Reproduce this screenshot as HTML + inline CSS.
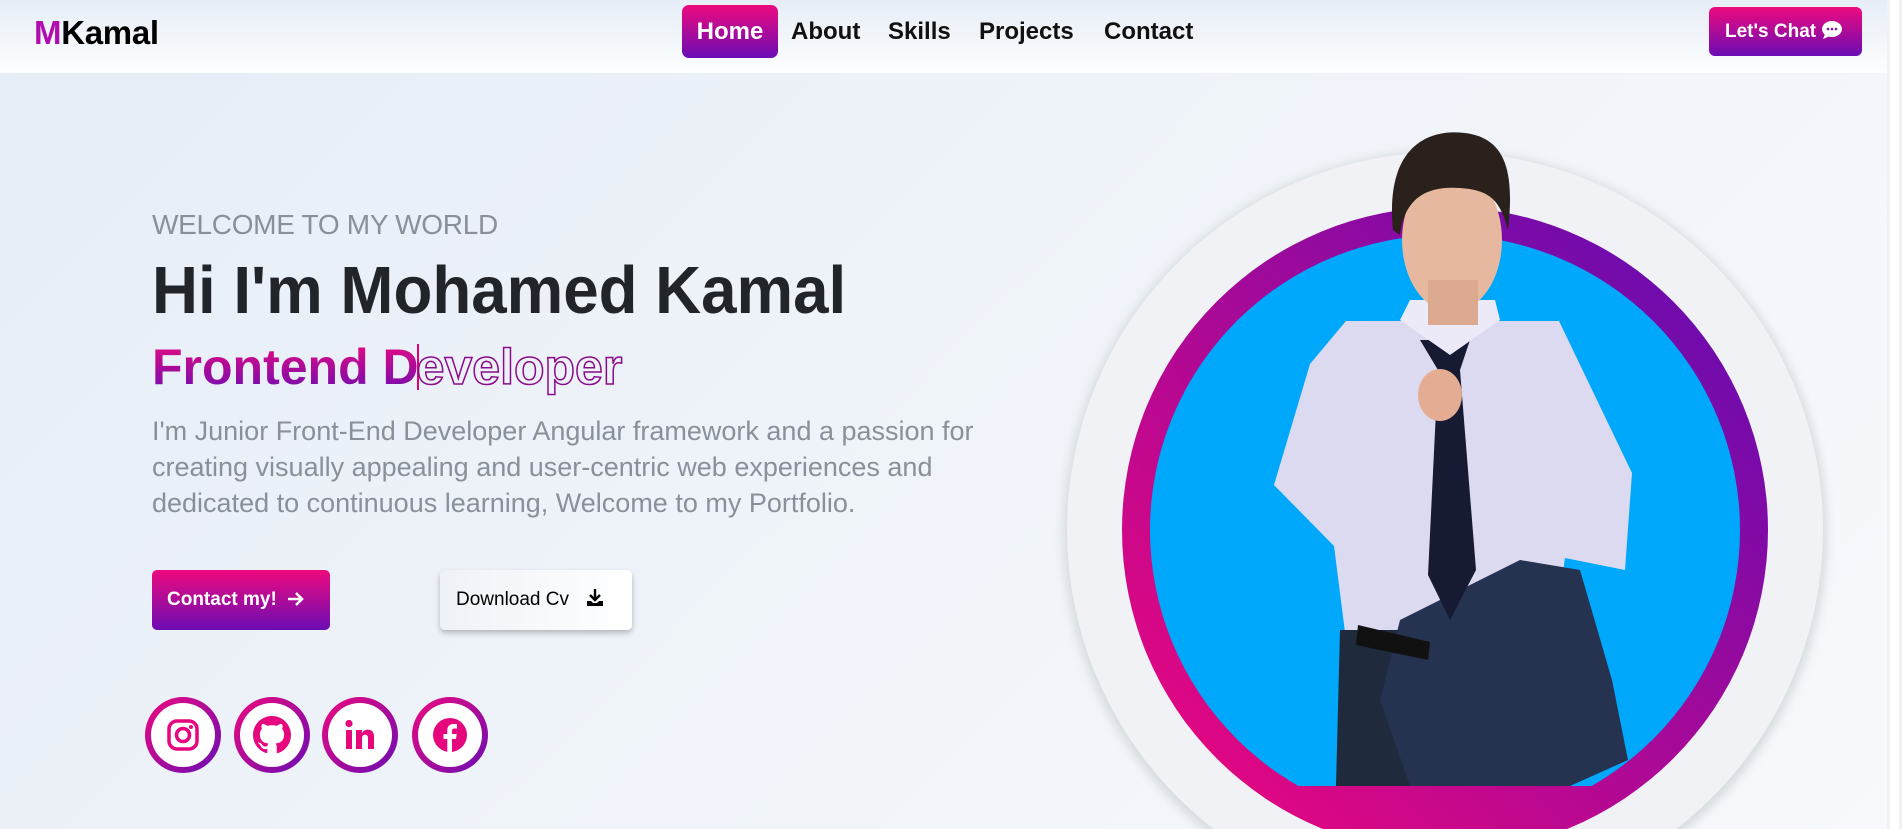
<!DOCTYPE html>
<html><head><meta charset="utf-8"><style>
*{margin:0;padding:0;box-sizing:border-box}
html,body{width:1902px;height:829px;overflow:hidden}
body{font-family:"Liberation Sans",Arial,sans-serif;background:linear-gradient(135deg,#e6edf6 0%,#f1f5fa 60%,#f7f9fc 100%);position:relative}
.nav{position:absolute;left:0;top:0;width:1887px;height:73px;background:linear-gradient(180deg,#e6edf6,#fdfeff)}
.logo{position:absolute;left:34px;top:14px;font-size:33px;font-weight:bold;color:#000;letter-spacing:-0.3px}
.logo span{color:#b00cb0}
.grad{background:linear-gradient(180deg,#ee0a7e,#6a0cb3)}
.home{position:absolute;left:682px;top:5px;width:96px;height:53px;border-radius:7px;color:#fff;font-weight:bold;font-size:24px;text-align:center;line-height:53px}
.nl{position:absolute;top:18px;font-size:24px;font-weight:bold;color:#111}
.chat{position:absolute;left:1709px;top:7px;width:153px;height:49px;border-radius:6px;color:#fff;font-weight:bold;font-size:19px;line-height:49px;padding-left:16px}
.sb{position:absolute;right:0;top:0;width:15px;height:829px;background:#f1f1f1}
.sb2{position:absolute;right:3px;top:0;width:9px;height:829px;background:#fff}
.welcome{position:absolute;left:152px;top:209px;font-size:28px;color:#8a9099;letter-spacing:-0.3px}
.hi{position:absolute;left:152px;top:252px;font-size:67px;font-weight:bold;color:#212529;transform:scaleX(.95);transform-origin:left;white-space:nowrap}
.fd{position:absolute;left:152px;top:338px;font-size:50px;font-weight:bold;white-space:nowrap}
.fd .a{background:linear-gradient(180deg,#ee0a7e,#6a0cb3);-webkit-background-clip:text;color:transparent}
.fd .b{color:transparent;-webkit-text-stroke:1.5px #8a0a8a}
.cur{display:inline-block;width:2px;height:46px;background:#e0007a;vertical-align:-6px;margin:0 -2px}
.p{position:absolute;left:152px;top:413px;width:850px;font-size:27px;line-height:36px;color:#8a9099}
.btn1{position:absolute;left:152px;top:570px;width:178px;height:60px;border-radius:5px;color:#fff;font-weight:bold;font-size:19px;line-height:60px;padding-left:15px}
.btn2{position:absolute;left:440px;top:570px;width:192px;height:60px;border-radius:5px;background:linear-gradient(90deg,#eef2f8,#fff);box-shadow:0 3px 6px rgba(0,0,0,.25);font-size:19px;line-height:60px;padding-left:16px;color:#000}
.soc{position:absolute;top:697px;width:76px;height:76px;border-radius:50%;background:linear-gradient(135deg,#ee0a7e,#6a0cb3);padding:6px}
.soc div{width:100%;height:100%;border-radius:50%;background:#fff;display:flex;align-items:center;justify-content:center}
svg.main{position:absolute;left:0;top:0;display:block}
</style></head><body>
<div class="nav">
<div class="logo"><span>M</span>Kamal</div>
<div class="home grad">Home</div>
<div class="nl" style="left:791px">About</div>
<div class="nl" style="left:888px">Skills</div>
<div class="nl" style="left:979px">Projects</div>
<div class="nl" style="left:1104px">Contact</div>
<div class="chat grad">Let's Chat <svg width="22" height="20" viewBox="0 0 22 20" style="vertical-align:-3px"><ellipse cx="11" cy="9" rx="10" ry="8" fill="#fff"/><path d="M4 14 L2 19 L9 16Z" fill="#fff"/><circle cx="7" cy="9" r="1.3" fill="#8a0cb0"/><circle cx="11" cy="9" r="1.3" fill="#8a0cb0"/><circle cx="15" cy="9" r="1.3" fill="#8a0cb0"/></svg></div>
</div>
<div class="welcome">WELCOME TO MY WORLD</div>
<div class="hi">Hi I'm Mohamed Kamal</div>
<div class="fd"><span class="a">Frontend D</span><span class="cur"></span><span class="b">eveloper</span></div>
<div class="p">I'm Junior Front-End Developer Angular framework and a passion for creating visually appealing and user-centric web experiences and dedicated to continuous learning, Welcome to my Portfolio.</div>
<div class="btn1 grad">Contact my! &nbsp;<svg width="18" height="16" viewBox="0 0 18 16" style="vertical-align:-2px"><path d="M1 8H15M9 2L15 8L9 14" stroke="#fff" stroke-width="2.6" fill="none"/></svg></div>
<div class="btn2">Download Cv &nbsp;&nbsp;<svg width="20" height="20" viewBox="0 0 20 20" style="vertical-align:-3px"><path d="M10 1V12M5 7L10 12L15 7" stroke="#000" stroke-width="2.4" fill="none"/><path d="M2 13V18H18V13H14L12 15H8L6 13Z" fill="#000"/></svg></div>
<div class="soc" style="left:145px"><div><svg width="34" height="34" viewBox="0 0 34 34"><rect x="3" y="3" width="28" height="28" rx="8" stroke="#e6077f" stroke-width="3.5" fill="none"/><circle cx="17" cy="17" r="6.5" stroke="#e6077f" stroke-width="3.5" fill="none"/><circle cx="25" cy="9" r="2" fill="#e6077f"/></svg></div></div>
<div class="soc" style="left:234px"><div><svg width="38" height="38" viewBox="0 0 16 16"><path fill="#e6077f" d="M8 0C3.58 0 0 3.58 0 8c0 3.54 2.29 6.53 5.47 7.59.4.07.55-.17.55-.38v-1.33c-2.23.48-2.7-1.07-2.7-1.07-.36-.92-.89-1.17-.89-1.17-.73-.5.06-.49.06-.49.8.06 1.23.82 1.23.82.71 1.22 1.87.87 2.33.66.07-.52.28-.87.5-1.07-1.78-.2-3.64-.89-3.64-3.95 0-.87.31-1.59.82-2.15-.08-.2-.36-1.02.08-2.12 0 0 .67-.21 2.2.82.64-.18 1.32-.27 2-.27.68 0 1.36.09 2 .27 1.53-1.04 2.2-.82 2.2-.82.44 1.1.16 1.92.08 2.12.51.56.82 1.27.82 2.15 0 3.07-1.87 3.75-3.65 3.95.29.25.54.73.54 1.48v2.2c0 .21.15.46.55.38A8.013 8.013 0 0016 8c0-4.42-3.58-8-8-8z"/></svg></div></div>
<div class="soc" style="left:322px"><div><svg width="34" height="34" viewBox="0 0 34 34"><rect x="3" y="12" width="6" height="19" fill="#e6077f"/><circle cx="6" cy="5.5" r="3.6" fill="#e6077f"/><path d="M13 12H19V15C20.5 12.5 23 11.5 25.5 11.7 29.5 12 31 14.5 31 19V31H25V20.5C25 18 24 16.8 22 16.8 20 16.8 19 18.2 19 20.5V31H13Z" fill="#e6077f"/></svg></div></div>
<div class="soc" style="left:412px"><div><svg width="38" height="38" viewBox="0 0 38 38"><circle cx="19" cy="19" r="17" fill="#e6077f"/><path d="M21 36V23H25L25.7 18H21V15C21 13.5 21.5 12.5 23.5 12.5H26V8.2C25.5 8.1 24 8 22.5 8 19 8 16.3 10 16.3 14V18H12.5V23H16.3V36Z" fill="#fff"/></svg></div></div>
<svg class="main" width="1887" height="829" viewBox="0 0 1887 829">
<defs><linearGradient id="rg" x1="1" y1="0" x2="0" y2="1"><stop offset="0" stop-color="#5a0cb5"/><stop offset="1" stop-color="#f5067a"/></linearGradient>
<clipPath id="cp"><rect x="0" y="0" width="1887" height="786"/></clipPath>
<clipPath id="all"><rect x="0" y="0" width="1887" height="829"/></clipPath>
<filter id="sh"><feGaussianBlur stdDeviation="5"/></filter></defs>
<g clip-path="url(#all)">
<circle cx="1445" cy="533" r="382" fill="#d6dbe0" filter="url(#sh)"/>
<circle cx="1445" cy="530" r="378" fill="#f0f2f6"/>
<circle cx="1445" cy="530" r="323" fill="url(#rg)"/>
<circle cx="1445" cy="530" r="295" fill="#00a8fc" clip-path="url(#cp)"/>
<path d="M1346 321L1559 321L1632 473L1625 570L1565 558L1553 640L1346 640L1334 546L1274 485L1310 364Z" fill="#dcdaf0"/>
<path d="M1340 630L1420 630L1420 786L1336 786Z" fill="#1f2a3d"/>
<path d="M1400 620L1520 560L1580 570L1612 680L1628 760L1570 786L1410 786L1380 700Z" fill="#253250"/>
<path d="M1358 625L1430 642L1428 660L1356 645Z" fill="#111"/>
<path d="M1420 340L1470 340L1460 370L1476 570L1450 620L1428 575L1438 370Z" fill="#161a33"/>
<path d="M1400 320L1450 355L1500 320L1495 300L1410 300Z" fill="#eceaf8"/>
<ellipse cx="1452" cy="240" rx="50" ry="72" fill="#e7b8a0"/>
<rect x="1428" y="280" width="50" height="45" fill="#dba990"/>
<path d="M1393 230C1385 150 1425 128 1465 133 1505 138 1515 170 1508 230 1500 200 1490 190 1460 188 1430 186 1405 195 1400 235Z" fill="#2a211d"/>
<ellipse cx="1440" cy="395" rx="22" ry="26" fill="#e3ac93"/>
</g>
</svg>
<div class="sb"></div><div class="sb2"></div>
</body></html>
